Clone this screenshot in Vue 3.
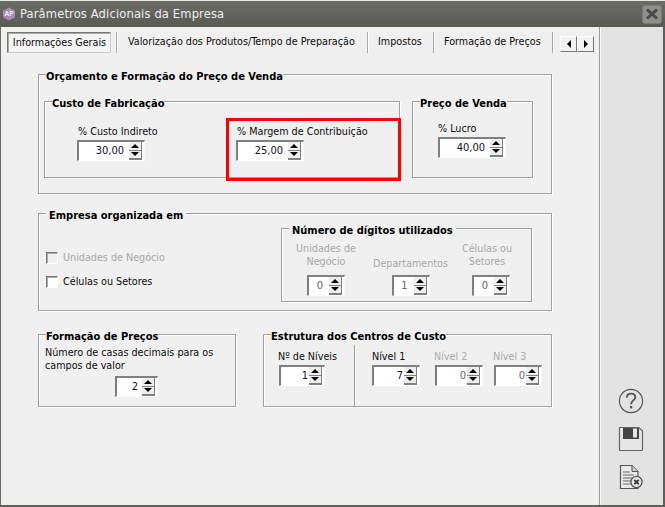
<script setup>
</script>

<template>
  <div class="win">
    <div class="titlebar">
      <svg class="logo" width="14" height="14" viewBox="0 0 14 14"><path d="M7 .5 13 3.7v6.6L7 13.5 1 10.3V3.7z" fill="#a98bb0"/><text x="7" y="9.4" text-anchor="middle" font-size="6.5" font-weight="700" fill="#f4eef6" font-family="Liberation Sans, sans-serif">AP</text></svg>
      <span class="title">Parâmetros Adicionais da Empresa</span>
      <span class="close"><svg width="16" height="12" viewBox="0 0 16 12"><path d="M3 1.5 13 10.5M13 1.5 3 10.5" stroke="#4a4a46" stroke-width="3"/></svg></span>
    </div>
    <div class="body">
      <div class="main">
        <div class="tabs">
          <div class="tab active"><span>Informações Gerais</span></div>
          <div class="sep s1"></div>
          <div class="tab t2">Valorização dos Produtos/Tempo de Preparação</div>
          <div class="sep"></div>
          <div class="tab t3">Impostos</div>
          <div class="sep"></div>
          <div class="tab t4">Formação de Preços</div>
          <div class="sep"></div>
          <div class="arrows">
            <span class="arrow"><i class="al"></i></span><span class="arrow"><i class="ar"></i></span>
          </div>
        </div>

        <div class="group outer">
          <div class="legend lg-outer">Orçamento e Formação do Preço de Venda</div>
          <div class="group custo">
            <div class="legend lg-custo">Custo de Fabricação</div>
            <div class="field f-custo">
              <div class="lbl">% Custo Indireto</div>
              <div class="spin w68"><span class="val">30,00</span><span class="btns"><i class="up"></i><i class="dn"></i></span></div>
            </div>
            <div class="field">
              <div class="lbl">% Margem de Contribuição</div>
              <div class="spin w68"><span class="val">25,00</span><span class="btns"><i class="up"></i><i class="dn"></i></span></div>
            </div>
            <div class="redbox"></div>
          </div>
          <div class="group preco">
            <div class="legend lg-preco">Preço de Venda</div>
            <div class="lbl lucro">% Lucro</div>
            <div class="spin w68 sp2"><span class="val">40,00</span><span class="btns"><i class="up"></i><i class="dn"></i></span></div>
          </div>
        </div>

        <div class="group empresa">
          <div class="legend lg-empresa">Empresa organizada em</div>
          <div class="checks">
            <label class="chk off"><i class="box"></i>Unidades de Negócio</label>
            <label class="chk"><i class="box"></i>Células ou Setores</label>
          </div>
          <div class="group digitos">
            <div class="legend lg-digitos">Número de dígitos utilizados</div>
            <div class="dcol c1">
              <div class="dlbl">Unidades de<br>Negócio</div>
              <div class="spin w38 off"><span class="val">0</span><span class="btns"><i class="up"></i><i class="dn"></i></span></div>
            </div>
            <div class="dcol c2">
              <div class="dlbl">Departamentos</div>
              <div class="spin w38 off"><span class="val">1</span><span class="btns"><i class="up"></i><i class="dn"></i></span></div>
            </div>
            <div class="dcol c3">
              <div class="dlbl">Células ou<br>Setores</div>
              <div class="spin w38 off sp3"><span class="val">0</span><span class="btns"><i class="up"></i><i class="dn"></i></span></div>
            </div>
          </div>
        </div>

        <div class="row3">
          <div class="group forma">
            <div class="legend lg-forma">Formação de Preços</div>
            <div class="ftext">Número de casas decimais para os<br>campos de valor</div>
            <div class="spin w43 fsp"><span class="val">2</span><span class="btns"><i class="up"></i><i class="dn"></i></span></div>
          </div>
          <div class="group estrutura">
            <div class="legend lg-estrutura">Estrutura dos Centros de Custo</div>
            <div class="ecol e0">
              <div class="lbl">Nº de Níveis</div>
              <div class="spin w46 tight s0"><span class="val">1</span><span class="btns"><i class="up"></i><i class="dn"></i></span></div>
            </div>
            <div class="ediv"></div>
            <div class="ecol e1">
              <div class="lbl">Nível 1</div>
              <div class="spin w48 tight"><span class="val">7</span><span class="btns"><i class="up"></i><i class="dn"></i></span></div>
            </div>
            <div class="ecol e2">
              <div class="lbl off">Nível 2</div>
              <div class="spin w48 tight off s1n"><span class="val">0</span><span class="btns"><i class="up"></i><i class="dn"></i></span></div>
            </div>
            <div class="ecol e3">
              <div class="lbl off">Nível 3</div>
              <div class="spin w48 tight off s1n"><span class="val">0</span><span class="btns"><i class="up"></i><i class="dn"></i></span></div>
            </div>
          </div>
        </div>
      </div>

      <div class="side">
        <svg class="ic" width="28" height="28" viewBox="0 0 28 28">
          <circle cx="14" cy="14" r="11.6" fill="none" stroke="#555" stroke-width="1.2"/>
          <path d="M9.8 10.8c0-2.7 1.9-4.2 4.3-4.2 2.5 0 4.2 1.5 4.2 3.6 0 3.2-4.2 3.2-4.2 7" fill="none" stroke="#555" stroke-width="1.9"/>
          <rect x="13" y="19" width="2.2" height="2.4" fill="#555"/>
        </svg>
        <svg class="ic i2" width="26" height="26" viewBox="0 0 26 26">
          <path d="M1.5 1.5H21L24.5 5V23.5Q24.5 24.5 23.5 24.5H2.5Q1.5 24.5 1.5 23.5z" fill="#e6e6e6" stroke="#666" stroke-width="1.2"/>
          <rect x="5" y="2" width="16" height="11" fill="#444"/>
          <rect x="15" y="2.5" width="4" height="9" fill="#e6e6e6"/>
        </svg>
        <svg class="ic i3" width="26" height="26" viewBox="0 0 26 26">
          <path d="M2.5 1.5H14L20 7.5V24.5H2.5z" fill="#e8e8e8" stroke="#555" stroke-width="1.2"/>
          <path d="M14 1.5V7.5H20" fill="#ccc" stroke="#555"/>
          <path d="M5 8H12M5 11H16M5 14H14M5 17H13M5 20H14" stroke="#666" stroke-width="1.1"/>
          <circle cx="18.5" cy="18" r="5.6" fill="#e6e6e6" stroke="#555" stroke-width="1.3"/>
          <path d="M16.3 15.8 20.7 20.2M20.7 15.8 16.3 20.2" stroke="#333" stroke-width="1.8"/>
        </svg>
      </div>
    </div>
  </div>
</template>

<style>
html, body { margin: 0; background: #fff; }
</style>

<style scoped>
.win {
  width: 665px; height: 507px; box-sizing: border-box; overflow: hidden;
  display: flex; flex-direction: column;
  border-top: 1px solid #e8e8e6;
  border-bottom: 2px solid #5e5e5a;
  font: 10.7px/14px "DejaVu Sans Condensed", "DejaVu Sans", sans-serif;
  font-stretch: condensed;
  color: #0c0c0c;
  background: #f0f0f0;
}
.titlebar {
  height: 26px; flex: none; display: flex; align-items: center;
  background: linear-gradient(#6d6d67, #5a5a55);
  padding: 0 2px 0 2px;
}
.logo { margin-right: 4px; }
.title { color: #eee; font: 12.8px/16px "DejaVu Sans Condensed", "DejaVu Sans", sans-serif; font-stretch: condensed; letter-spacing: .15px; }
.close {
  margin-left: auto; margin-right: 1px; width: 20px; height: 19px; border-radius: 3px;
  background: #8f8f8b; border: 1px solid #7a7a76; box-sizing: border-box;
  display: flex; align-items: center; justify-content: center;
}
.body { flex: 1; display: flex; min-height: 0; border-left: 1px solid #6a6a66; border-right: 2px solid #5e5e5a; }
.main { width: 598px; flex: none; background: #f0f0f0; border-right: 1px solid #9c9c9c; box-sizing: content-box; }
.side {
  flex: 1; background: #e3e3e3; border-left: 1px solid #fafafa;
  display: flex; flex-direction: column; align-items: center; padding-top: 360px;
  padding-right: 2px;
}
.ic { display: block; }
.i2 { margin-top: 11px; }
.i3 { margin-top: 12px; }

.tabs { display: flex; align-items: flex-start; margin: 5px 0 0 6px; height: 21px; }
.tab { height: 20px; line-height: 19px; white-space: nowrap; }
.tab.active {
  width: 104px; height: 21px; box-sizing: border-box;
  border: 1px solid; border-color: #777 #ccc #ccc #777;
  background: #f4f4f4; text-align: center; line-height: 20px; padding-left: 1px;
  box-shadow: inset 1px 1px 0 #aaa;
}
.sep { width: 1px; height: 21px; background: #aaa; box-shadow: 1px 0 0 #fff; margin: 0 10px 0 11px; }
.sep.s1 { margin: 0 11px 0 5px; }
.t2 { width: 228px; }
.t3 { width: 44px; }
.t4 { width: 97px; }
.arrows { display: flex; margin-left: -3px; margin-top: 4px; }
.arrow {
  width: 17px; height: 16px; box-sizing: border-box; background: #f2f2f2;
  border: 1px solid; border-color: #fff #777 #777 #fff;
  display: flex; align-items: center; justify-content: center;
}
.al, .ar { width: 0; height: 0; border: 4px solid transparent; }
.al { border-right: 4px solid #000; border-left: 0; }
.ar { border-left: 4px solid #000; border-right: 0; }

.group {
  position: relative; box-sizing: border-box; border: 1px solid #a0a0a0;
  box-shadow: 1px 1px 0 #fff, inset 1px 1px 0 #fff;
}
.legend {
  position: absolute; top: -6px; font-weight: 700; line-height: 15px; color: #000;
  background: #f0f0f0; white-space: nowrap; font-size: 11px;
}
.outer { margin: 21px 0 0 37px; width: 514px; height: 120px; display: flex; align-items: flex-start; padding: 26px 0 0 5px; }
.lg-outer { left: 7px; }
.custo { width: 356px; height: 77px; flex: none; display: flex; padding: 23px 0 0 32px; }
.lg-custo { left: 7px; }
.f-custo { width: 159px; flex: none; }
.redbox {
  position: absolute; left: 181px; top: 16px; width: 175px; height: 63px;
  box-sizing: border-box; border: 3px solid #f00; pointer-events: none;
}
.preco { width: 121px; height: 77px; margin-left: 12px; flex: none; padding: 20px 0 0 25px; }
.lg-preco { left: 7px; }
.lbl { line-height: 14px; margin-bottom: 1px; white-space: nowrap; padding-left: 1px; }
.lbl.off { color: #aaa; }
.lucro { padding-left: 0; }
.sp2 { margin-top: 1px; }

.spin {
  box-sizing: border-box; height: 21px; display: flex; align-items: stretch;
  border: 2px solid; border-color: #808080 #f8f8f8 #fff #808080;
  border-right-width: 1px; border-bottom-width: 1px;
  background: #fff; padding-right: 2px;
}
.w68 { width: 68px; }
.w38 { width: 38px; }
.w43 { width: 43px; }
.w46 { width: 46px; }
.w48 { width: 48px; }
.val { flex: 1; text-align: right; padding-right: 5px; line-height: 18px; font-size: 11px; color: #101030; }
.w38 .val { padding-right: 6px; }
.w43 .val { padding-right: 4px; }
.tight .val { padding-right: 1px; }
.btns {
  width: 13px; flex: none; display: flex; flex-direction: column;
  background: #eee; box-sizing: border-box;
  border-right: 1px solid #808080; border-bottom: 2px solid #808080;
}
.btns i { flex: 1; position: relative; display: block; }
.btns i.up { border-bottom: 1px solid #808080; }
.btns i::after {
  content: ""; position: absolute; left: 50%; top: 50%; margin: -2px 0 0 -4px;
  border: 4px solid transparent; border-top-width: 0; border-bottom: 4px solid #000;
}
.btns i.dn::after { border-bottom-width: 0; border-top: 4px solid #000; margin-top: -2px; }
.spin.off .val { color: #666; }

.empresa { margin: 19px 0 0 37px; width: 514px; height: 98px; display: flex; align-items: flex-start; padding-left: 7px; }
.lg-empresa { left: 7px; padding: 0 3px; }
.checks { width: 235px; flex: none; padding-top: 37px; }
.chk { display: flex; align-items: center; height: 14px; }
.chk + .chk { margin-top: 10px; }
.chk.off { color: #a8a8a8; }
.box {
  width: 12px; height: 12px; box-sizing: border-box; flex: none; margin-right: 5px;
  background: #fff; border: 1px solid; border-color: #777 #fff #fff #777;
  box-shadow: inset 1px 1px 0 #aaa;
}
.chk.off .box { background: #f0f0f0; }
.digitos { width: 251px; height: 74px; margin-top: 14px; flex: none; display: flex; align-items: flex-end; padding: 0 0 5px 0; }
.lg-digitos { left: 7px; padding: 0 3px; }
.dcol { display: flex; flex-direction: column; align-items: center; }
.dlbl { text-align: center; color: #a8a8a8; line-height: 13px; margin-bottom: 7px; white-space: nowrap; }
.c1 { width: 88px; }
.c2 { width: 81px; }
.c2 .dlbl { margin-bottom: 5px; }
.c3 { width: 72px; }
.sp3 { margin-left: 8px; }

.row3 { display: flex; align-items: flex-start; margin: 23px 0 0 37px; }
.forma { width: 198px; height: 73px; padding: 11px 0 0 6px; }
.lg-forma { left: 7px; }
.ftext { line-height: 13px; white-space: nowrap; }
.fsp { margin: 4px 0 0 70px; }
.estrutura { width: 289px; height: 73px; margin-left: 27px; display: flex; align-items: flex-start; }
.lg-estrutura { left: 7px; }
.ecol { padding-top: 15px; }
.estrutura .lbl { padding-left: 0; }
.e0 { width: 76px; padding-left: 14px; box-sizing: content-box; }
.s0 { margin-left: 1px; }
.ediv { width: 1px; height: 61px; margin: 10px 0 0 0; background: #a0a0a0; box-shadow: 1px 0 0 #fff; }
.e1 { width: 48px; margin-left: 17px; }
.e2 { width: 48px; margin-left: 14px; }
.e3 { width: 48px; margin-left: 11px; }
.s1n { margin-left: 1px; }
</style>
